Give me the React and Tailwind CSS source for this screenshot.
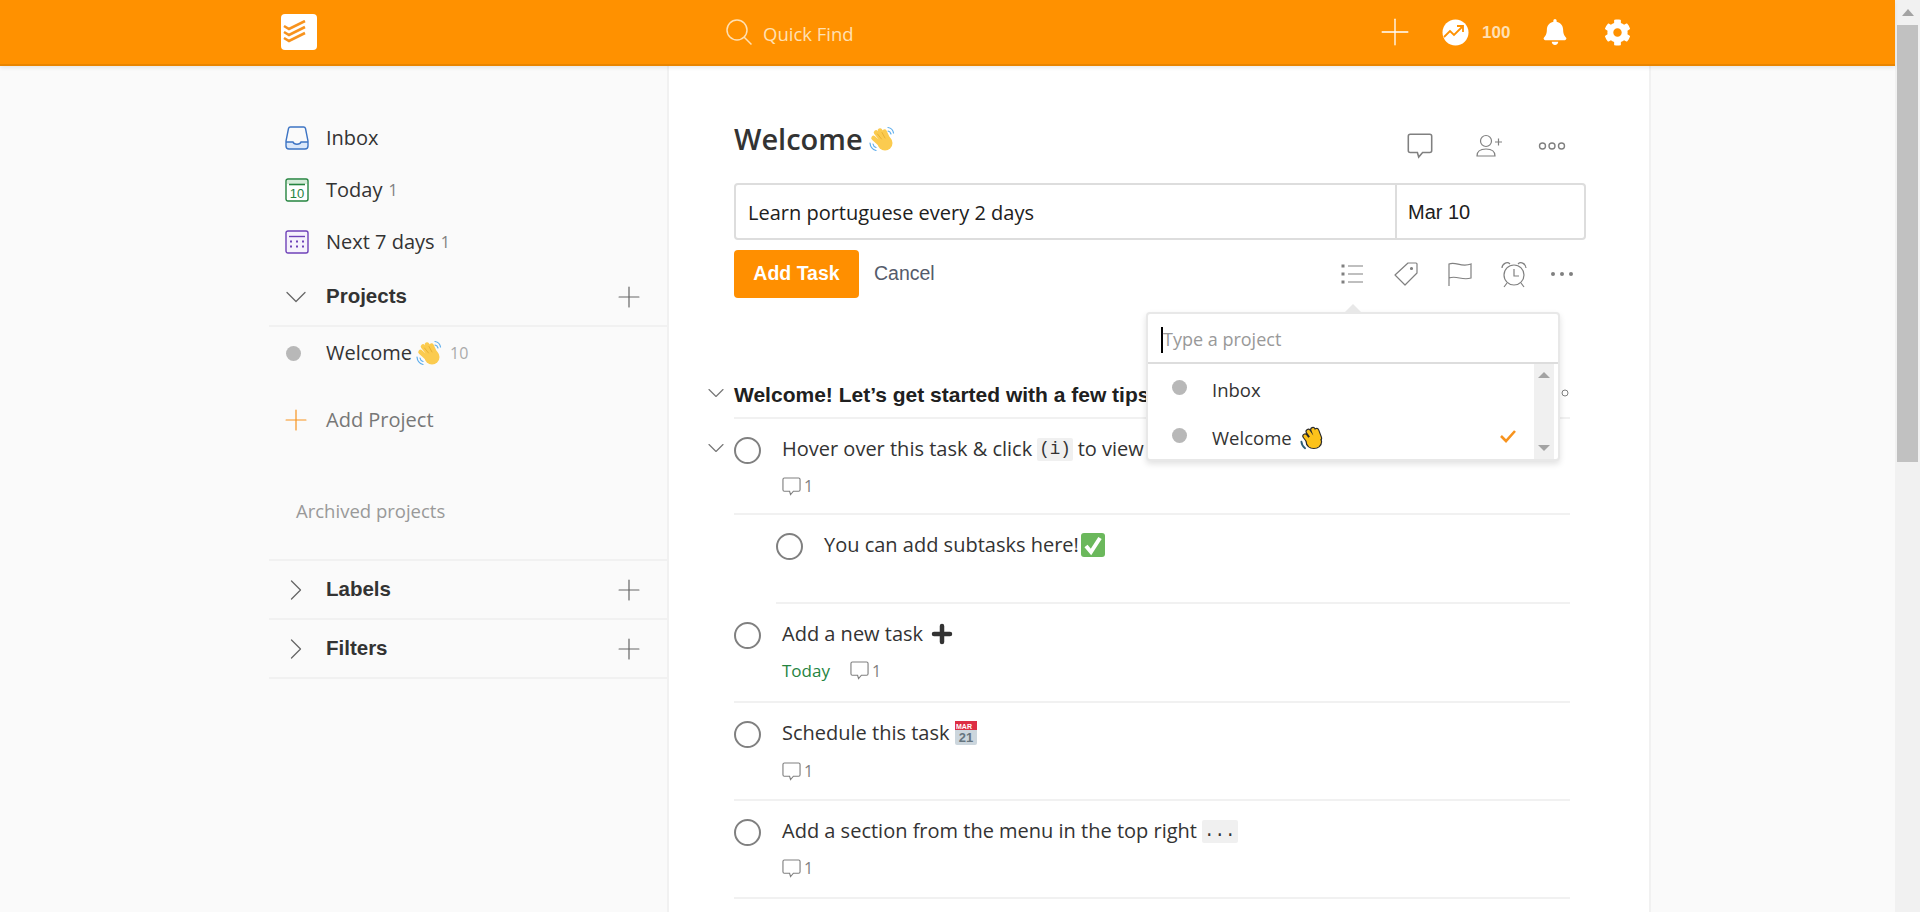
import { ChevronDown, ChevronRight, Plus } from "lucide-react"
import { FaBell, FaCog } from "react-icons/fa"

function Logo() {
  return (
    <div className="w-9 h-9 bg-white rounded-[4px] flex items-start pl-0.5 pt-1.5">
      <svg width="24" height="24" viewBox="0 0 24 24" fill="none" stroke="#f7931e" strokeWidth="2.6">
        <path d="M1 6l5 3L22 1" />
        <path d="M1 12l5 3 16-8" />
        <path d="M1 18l5 3 16-8" />
      </svg>
    </div>
  )
}

function Wave({ size = 26 }) {
  return (
    <svg width={size} height={size} viewBox="0 0 26 26" fill="none" strokeLinecap="round">
      <g stroke="#fbcb4f" strokeWidth="4.500">
        <path d="M10 17L4.500 12M13 14L7 6.500M16 13l-5-8.500M19 13l-3.500-7.500" />
      </g>
      <ellipse cx="16" cy="17" rx="7.500" ry="7.500" fill="#fbcb4f" />
      <path d="M12.500 13L8.500 8M16 12l-3-5.500" stroke="#e3a92f" strokeWidth="0.800" />
      <path d="M19 1.500c3 .5 5 2.500 5.500 5.500M19 5c1.500 .3 2.500 1.300 3 3" stroke="#5dadec" strokeWidth="1.200" />
      <path d="M1 17c.3 3.500 2.500 6.500 6 7.500M4 18c.3 1.700 1.300 3 3 3.500" stroke="#5dadec" strokeWidth="1.200" />
    </svg>
  )
}

function Clap() {
  return (
    <svg width="24" height="24" viewBox="0 0 26 26" fill="none" strokeLinecap="round">
      <g stroke="#2a2a2a" strokeWidth="6">
        <path d="M10 17L5.500 11M14 13L9 6M17 12l-3-8M21 13l-3-8" />
      </g>
      <ellipse cx="15" cy="17" rx="9" ry="8" fill="#2a2a2a" />
      <g stroke="#fcc21b" strokeWidth="3.600">
        <path d="M10 17L5.500 11M14 13L9 6M17 12l-3-8M21 13l-3-8" />
      </g>
      <ellipse cx="15" cy="17" rx="7.700" ry="6.800" fill="#fcc21b" />
      <path d="M1.500 17c.3 3 1.800 5.500 4 7" stroke="#2a5d78" strokeWidth="2" />
    </svg>
  )
}

function Bubble({ size = 20 }) {
  return (
    <svg width={size} height={size} viewBox="0 0 20 20" fill="none" stroke="#808080" strokeWidth="1.2">
      <path d="M2.5 1h15a1.5 1.5 0 0 1 1.5 1.500v11a1.500 1.500 0 0 1-1.500 1.500H12l-3 3.500-1-3.500H2.500A1.500 1.500 0 0 1 1 13.500v-11A1.500 1.500 0 0 1 2.500 1z" />
    </svg>
  )
}

function Circle() {
  return <span className="block w-[27px] h-[27px] rounded-full border-2 border-[#808080] shrink-0" />
}

function Code({ children }) {
  return <code className="mx-[5px] px-[2px] h-[23px] leading-[23px] rounded-[2px] bg-[#f0f0f0] font-['Liberation_Mono',monospace] text-[17.5px] text-[#333]">{children}</code>
}

function NavRow({ icon, label, count }) {
  return (
    <div className="h-[52px] flex items-center">
      <span className="w-[57px] pl-4 shrink-0">{icon}</span>
      <span className="text-[#333]">{label}</span>
      {count && <span className="ml-[6px] text-[16px] text-[#808080]">{count}</span>}
    </div>
  )
}

function GroupRow({ open, label, h = "h-[59px]" }) {
  return (
    <div className={`${h} flex items-center border-b-2 border-[#f1f1f1] pr-[21px]`}>
      <span className="w-[57px] shrink-0 text-[#666]">
        {open
          ? <ChevronDown size={36} strokeWidth={0.85} className="ml-[9px]" />
          : <ChevronRight size={36} strokeWidth={0.85} className="ml-[9px]" />}
      </span>
      <span className="flex-1 font-['Liberation_Sans',sans-serif] font-bold text-[20.500px] text-[#333]">{label}</span>
      <Plus size={34} strokeWidth={0.85} className="text-[#666]" />
    </div>
  )
}

function Sidebar() {
  return (
    <aside className="w-[398px] shrink-0 pt-[46px]">
      <NavRow
        label="Inbox"
        icon={
          <svg width="24" height="24" viewBox="0 0 24 24" fill="none" stroke="#3d74c4" strokeWidth="1.400">
            <path d="M1 16h7c1 3 7 3 8 0h7v4a3 3 0 0 1-3 3H4a3 3 0 0 1-3-3z" fill="#dbe8fa" stroke="none" />
            <path d="M5.500 1h13a2 2 0 0 1 2 1.500L23 15v5a3 3 0 0 1-3 3H4a3 3 0 0 1-3-3v-5L3.500 2.500A2 2 0 0 1 5.500 1z" />
            <path d="M1 16h7c1 3 7 3 8 0h7" />
          </svg>
        }
      />
      <NavRow
        label="Today"
        count="1"
        icon={
          <svg width="24" height="24" viewBox="0 0 24 24" fill="none" stroke="#25843f" strokeWidth="1.400">
            <rect x="1" y="1" width="22" height="22" rx="2" fill="#fff" />
            <rect x="2" y="2" width="20" height="4" fill="#d6ecd9" stroke="none" />
            <path d="M4 6.500h16" strokeWidth="1.600" />
            <text x="12" y="19.500" textAnchor="middle" fontSize="13" fill="#25843f" stroke="none" fontFamily="Liberation Sans">10</text>
          </svg>
        }
      />
      <NavRow
        label="Next 7 days"
        count="1"
        icon={
          <svg width="24" height="24" viewBox="0 0 24 24" fill="none" stroke="#6f42b8" strokeWidth="1.400">
            <rect x="1" y="1" width="22" height="22" rx="2" fill="#f6f2fc" />
            <path d="M4 6.500h16" />
            <path d="M5 11.500h2M11 11.500h2M17 11.500h2M5 16.500h2M11 16.500h2M17 16.500h2" strokeWidth="2.200" />
          </svg>
        }
      />
      <GroupRow open label="Projects" />
      <div className="h-[52px] flex items-center">
        <span className="w-[57px] pl-[17px] shrink-0"><span className="block w-[15px] h-[15px] rounded-full bg-[#b8b8b8]" /></span>
        <span className="text-[#333] mr-1">Welcome</span>
        <Wave />
        <span className="ml-2 text-[16px] text-[#aaa]">10</span>
      </div>
      <div className="h-[52px] mt-[15px] flex items-center">
        <span className="w-[57px] pl-[10px] shrink-0"><Plus size={34} strokeWidth={0.85} className="text-[#f7931e]" /></span>
        <span className="text-[#777]">Add Project</span>
      </div>
      <div className="h-[115px] pl-[27px] pt-[51px] border-b-2 border-[#f1f1f1] text-[18.500px] text-[#999]">Archived projects</div>
      <GroupRow label="Labels" />
      <GroupRow label="Filters" />
    </aside>
  )
}

function Toolbar() {
  return (
    <div className="flex items-center text-[#808080]">
      <svg className="mr-[29px]" width="24" height="24" viewBox="0 0 24 24" fill="none" stroke="#808080" strokeWidth="1.200">
        <path d="M8 4h15M8 12h15M8 20h15" />
        <path d="M1.500 4h3M1.500 12h3M1.500 20h3" strokeWidth="3" />
      </svg>
      <svg className="mr-[28px]" width="26" height="26" viewBox="0 0 26 26" fill="none" stroke="#808080" strokeWidth="1.200">
        <path d="M15 2h8a1 1 0 0 1 1 1v9L12 24 2 14z" strokeLinejoin="round" />
        <circle cx="18.500" cy="7.500" r="1" fill="#808080" />
      </svg>
      <svg className="mr-[27px]" width="26" height="26" viewBox="0 0 26 26" fill="none" stroke="#808080" strokeWidth="1.200">
        <path d="M2 25V3c7-3 12 4 22 0v14c-9 3-14-3-22 0" />
      </svg>
      <svg className="mr-[22px]" width="28" height="28" viewBox="0 0 28 28" fill="none" stroke="#808080" strokeWidth="1.200">
        <circle cx="14" cy="15" r="10" />
        <path d="M14 9v7h5M2 8c0-4 5-7 8-4M26 8c0-4-5-7-8-4M7 23l-3 4M21 23l3 4" />
      </svg>
      <svg width="24" height="6" viewBox="0 0 24 6" fill="#808080">
        <circle cx="3" cy="3" r="2" />
        <circle cx="12" cy="3" r="2" />
        <circle cx="21" cy="3" r="2" />
      </svg>
    </div>
  )
}

function ProjectPopup() {
  return (
    <div className="absolute left-[477px] top-[246px] w-[414px] h-[149px] bg-white border-2 border-[#e8e8e8] rounded-[4px] shadow-[0_3px_6px_rgba(0,0,0,0.12)] z-10">
      <div className="absolute -top-[10px] left-[196px] w-0 h-0 border-x-[9px] border-x-transparent border-b-[9px] border-b-[#e8e8e8]" />
      <div className="h-[50px] border-b-2 border-[#ddd] flex items-center pl-[13px] pt-[3px]">
        <span className="w-[2px] h-[26px] bg-black" />
        <span className="text-[18px] text-[#999]">Type a project</span>
      </div>
      <div className="flex h-[95px] text-[18.500px]">
        <div className="flex-1">
          <div className="h-[48px] flex items-center pl-[24px] pt-[3px]">
            <span className="w-[15px] h-[15px] rounded-full bg-[#b8b8b8] mr-[25px] -mt-1" />
            <span className="text-[#333]">Inbox</span>
          </div>
          <div className="h-[48px] flex items-center pl-[24px] pr-[17px] pt-[3px]">
            <span className="w-[15px] h-[15px] rounded-full bg-[#b8b8b8] mr-[25px] -mt-1" />
            <span className="text-[#333] mr-2">Welcome</span>
            <Clap />
            <svg className="ml-auto -mt-1" width="18" height="14" viewBox="0 0 18 14" fill="none" stroke="#f7931e" strokeWidth="2.600">
              <path d="M2 7l5 5L16 2" />
            </svg>
          </div>
        </div>
        <div className="w-[20px] mr-[4px] bg-[#f0f0f0] flex flex-col justify-between items-center py-2">
          <span className="w-0 h-0 border-x-[6px] border-x-transparent border-b-[6px] border-b-[#a3a3a3]" />
          <span className="w-0 h-0 border-x-[6px] border-x-transparent border-t-[6px] border-t-[#a3a3a3]" />
        </div>
      </div>
    </div>
  )
}

function TaskRow({ h, left = "", children, meta, chevron }) {
  return (
    <div className={`${h} border-b-2 border-[#f1f1f1] ${left} relative`}>
      {chevron && <ChevronDown size={28} strokeWidth={1} className="absolute -left-[32px] top-[15px] text-[#777]" />}
      <div className="flex items-start pt-[18px]">
        <Circle />
        <div className="pl-[21px]">
          <div className="h-[24px] flex items-center text-[#333]">{children}</div>
          {meta}
        </div>
      </div>
    </div>
  )
}

function Comments() {
  return (
    <span className="flex items-center text-[16px] text-[#808080]">
      <Bubble size={19} />
      <span className="ml-[3px]">1</span>
    </span>
  )
}

function TaskList() {
  return (
    <div className="w-[836px] mt-[71px]">
      <div className="h-[50px] border-b-2 border-[#f1f1f1] flex items-center justify-between relative pt-1 pr-[1px]">
        <ChevronDown size={28} strokeWidth={1} className="absolute -left-[32px] top-[10px] text-[#777]" />
        <span className="font-['Liberation_Sans',sans-serif] font-bold text-[21px] text-[#202020]">Welcome! Let’s get started with a few tips</span>
        <svg className="-mt-1" width="30" height="8" viewBox="0 0 30 8" fill="none" stroke="#808080">
          <circle cx="4" cy="4" r="3" />
          <circle cx="15" cy="4" r="3" />
          <circle cx="26" cy="4" r="3" />
        </svg>
      </div>
      <TaskRow h="h-[96px]" chevron meta={<div className="mt-[13px]"><Comments /></div>}>
        Hover over this task &amp; click <Code>(i)</Code> to view details
      </TaskRow>
      <TaskRow h="h-[89px]" left="ml-[42px]">
        You can add subtasks here!
        <svg className="ml-0.5" width="24" height="24" viewBox="0 0 24 24" fill="none">
          <rect width="24" height="24" rx="3" fill="#6bb85c" />
          <path d="M5 13l5 6L19 5" stroke="#fff" strokeWidth="4" />
        </svg>
      </TaskRow>
      <TaskRow h="h-[99px]" meta={
        <div className="mt-[12px] flex items-center">
          <span className="text-[17px] text-[#25843f] mr-5">Today</span>
          <Comments />
        </div>
      }>
        Add a new task
        <svg className="ml-2" width="22" height="22" viewBox="0 0 22 22" stroke="#333" strokeWidth="4.500" strokeLinecap="round">
          <path d="M11 3v16M3 11h16" />
        </svg>
      </TaskRow>
      <TaskRow h="h-[98px]" meta={<div className="mt-[14px]"><Comments /></div>}>
        Schedule this task
        <svg className="ml-1.5" width="22" height="24" viewBox="0 0 22 24">
          <rect width="22" height="24" rx="2" fill="#ccd6dd" />
          <rect width="22" height="9" fill="#dd2e44" />
          <text x="1" y="7.500" fontSize="7" fontWeight="700" fill="#fff" fontFamily="Liberation Sans">MAR</text>
          <text x="11" y="21" textAnchor="middle" fontSize="13" fontWeight="700" fill="#66757f" fontFamily="Liberation Sans">21</text>
        </svg>
      </TaskRow>
      <TaskRow h="h-[98px]" meta={<div className="mt-[13px]"><Comments /></div>}>
        Add a section from the menu in the top right <Code>...</Code>
      </TaskRow>
    </div>
  )
}

function MainColumn() {
  return (
    <main className="w-[984px] shrink-0 h-[846px] bg-white border-x-2 border-[#f1f1f1] pl-[65px] relative overflow-hidden">
      <div className="w-[852px] h-[117px] flex items-end pb-[24px] justify-between pr-[20px]">
        <h1 className="flex items-center gap-1.5 text-[29px] font-semibold text-[#333] leading-none pb-[6px]">
          Welcome <Wave />
        </h1>
        <div className="flex items-center text-[#808080]">
          <Bubble size={26} />
          <svg className="ml-[43px]" width="26" height="24" viewBox="0 0 26 24" fill="none" stroke="#808080" strokeWidth="1.200">
            <circle cx="10" cy="7" r="5.500" />
            <path d="M1 22c0-7 6-7 9-7s9 0 9 7zM19 8h7M22.500 4.500v7" />
          </svg>
          <svg className="ml-[36px]" width="28" height="10" viewBox="0 0 28 10" fill="none" stroke="#808080" strokeWidth="1.400">
            <circle cx="4.500" cy="5" r="3" />
            <circle cx="14" cy="5" r="3" />
            <circle cx="23.500" cy="5" r="3" />
          </svg>
        </div>
      </div>
      <div className="w-[852px] h-[57px] flex border-2 border-[#ddd] rounded-[4px]">
        <div className="flex-1 flex items-center pl-[12px] pt-[3px] text-[#202020]">Learn portuguese every 2 days</div>
        <div className="w-[189px] border-l-2 border-[#ddd] flex items-center pl-[11px] pt-px font-['Liberation_Sans',sans-serif] text-[20px] text-[#202020]">Mar 10</div>
      </div>
      <div className="w-[852px] h-[48px] mt-[10px] flex items-center font-['Liberation_Sans',sans-serif]">
        <button className="w-[125px] h-[48px] bg-[#ff8f00] rounded-[4px] text-white font-bold text-[19.500px]">Add Task</button>
        <span className="ml-[15px] text-[19.500px] text-[#555b6b]">Cancel</span>
        <div className="ml-auto pr-[12px]"><Toolbar /></div>
      </div>
      <TaskList />
      <ProjectPopup />
    </main>
  )
}

function Header() {
  return (
    <header className="h-[66px] bg-[#ff9100] border-b-2 border-[#e98500] shadow-[0_2px_4px_rgba(0,0,0,0.08)] relative z-20 flex items-center pl-[281px]">
      <Logo />
      <div className="ml-[408px] flex items-center text-[#ffe0b3]">
        <svg width="28" height="28" viewBox="0 0 28 28" fill="none" stroke="currentColor" strokeWidth="1.500">
          <circle cx="12" cy="12" r="10" />
          <path d="M19 19l7.500 7.500" />
        </svg>
        <span className="ml-[10px] mt-1 w-[92px] text-[18.500px]">Quick Find</span>
      </div>
      <div className="ml-[518px] flex items-center text-white">
        <Plus size={44} strokeWidth={0.7} />
        <svg className="ml-[25px]" width="27" height="27" viewBox="0 0 27 27">
          <circle cx="13.500" cy="13.500" r="13" fill="#fff" />
          <path d="M2 18l6-6 4 4 8-8M15 7h6v6" fill="none" stroke="#ff9100" strokeWidth="1.800" />
        </svg>
        <span className="ml-[13px] mt-px w-[60px] font-['Liberation_Sans',sans-serif] font-bold text-[17px] text-[#ffe0b3]">100</span>
        <FaBell size={26} />
        <FaCog size={27} className="ml-[36px]" />
      </div>
    </header>
  )
}

function Scrollbar() {
  return (
    <div className="w-[25px] h-[912px] bg-[#f1f1f1] flex flex-col items-center shrink-0">
      <div className="h-[25px] flex items-center">
        <span className="w-0 h-0 border-x-[6px] border-x-transparent border-b-[7px] border-b-[#a3a3a3]" />
      </div>
      <div className="w-[21px] h-[437px] bg-[#c1c1c1]" />
    </div>
  )
}

export default function App() {
  return (
    <div className="w-[1920px] h-[912px] flex overflow-hidden bg-[#fafafa] font-['Open_Sans',sans-serif] text-[20px]">
      <div className="w-[1895px] shrink-0">
        <Header />
        <div className="flex pl-[269px]">
          <Sidebar />
          <MainColumn />
        </div>
      </div>
      <Scrollbar />
    </div>
  )
}
